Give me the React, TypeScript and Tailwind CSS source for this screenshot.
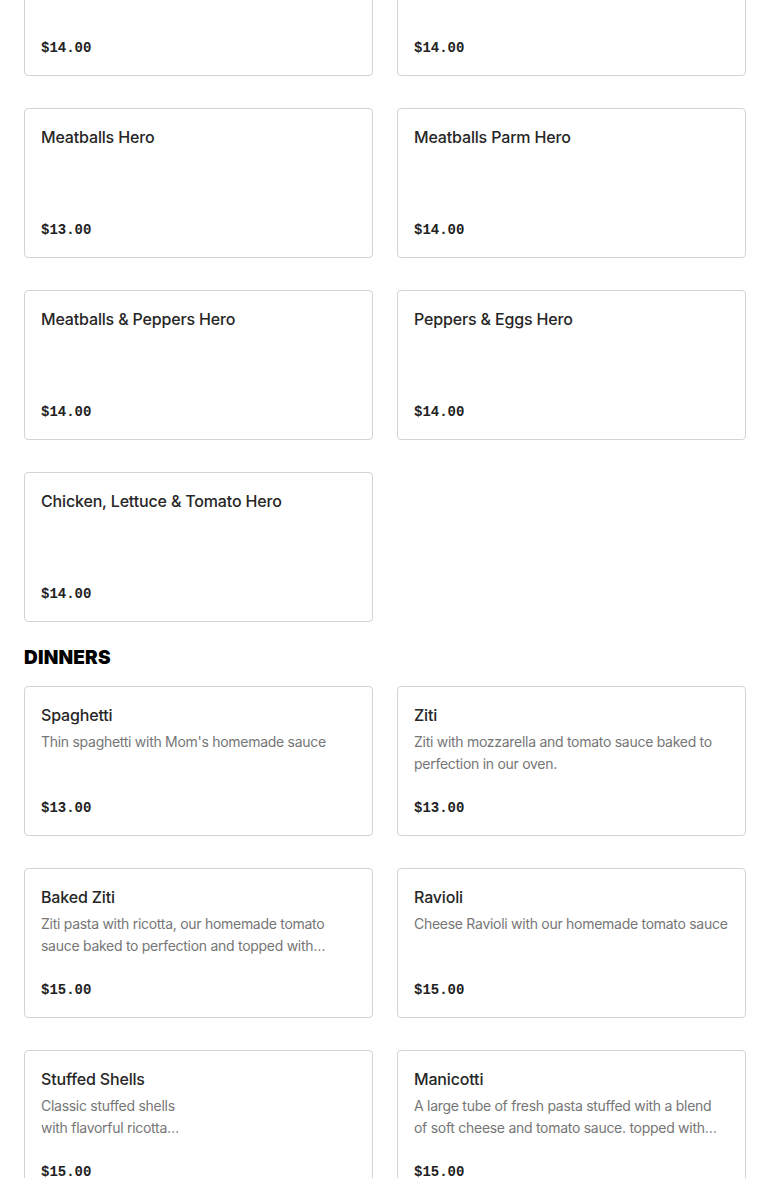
type Item = { name: string; desc?: string; price: string }

const heroes: Item[] = [
  { name: 'Sausage & Peppers Hero', price: '$14.00' },
  { name: 'Sausage Parm Hero', price: '$14.00' },
  { name: 'Meatballs Hero', price: '$13.00' },
  { name: 'Meatballs Parm Hero', price: '$14.00' },
  { name: 'Meatballs & Peppers Hero', price: '$14.00' },
  { name: 'Peppers & Eggs Hero', price: '$14.00' },
  { name: 'Chicken, Lettuce & Tomato Hero', price: '$14.00' },
]

const dinners: Item[] = [
  { name: 'Spaghetti', desc: "Thin spaghetti with Mom's homemade sauce", price: '$13.00' },
  { name: 'Ziti', desc: 'Ziti with mozzarella and tomato sauce baked to perfection in our oven.', price: '$13.00' },
  {
    name: 'Baked Ziti',
    desc: 'Ziti pasta with ricotta, our homemade tomato sauce baked to perfection and topped with mozzarella cheese.',
    price: '$15.00',
  },
  { name: 'Ravioli', desc: 'Cheese Ravioli with our homemade tomato sauce', price: '$15.00' },
  { name: 'Stuffed Shells', desc: 'Classic stuffed shells\nwith flavorful ricotta\ncheese, topped with tomato sauce and mozzarella.', price: '$15.00' },
  {
    name: 'Manicotti',
    desc: 'A large tube of fresh pasta stuffed with a blend\nof soft cheese and tomato sauce. topped with mozzarella.',
    price: '$15.00',
  },
]

function Card({ item }: { item: Item }) {
  return (
    <div className="h-[150px] rounded border border-[#d4d4d4] bg-white pl-4 pr-[17px] pt-4 pb-[15px] flex flex-col">
      <h3 className="text-[16px] leading-6 font-medium tracking-[-0.01em] text-[#262626]">{item.name}</h3>
      {item.desc && (
        <p className="mt-1 text-[14px] leading-[22px] tracking-[-0.02em] text-[#767676] line-clamp-2 whitespace-pre-line">
          {item.desc}
        </p>
      )}
      <div className="mt-auto font-['Liberation_Mono',monospace] text-[14px] leading-6 font-bold text-[#222]">
        {item.price}
      </div>
    </div>
  )
}

export default function App() {
  return (
    <div className="bg-white min-h-screen px-6 font-['Inter',sans-serif] overflow-hidden">
      <div className="-mt-[74px] grid grid-cols-2 gap-x-6 gap-y-8">
        {heroes.map((item) => (
          <Card key={item.name} item={item} />
        ))}
      </div>
      <h2 className="mt-6 mb-4 text-[19px] leading-6 font-black tracking-[0.01em] text-black uppercase">Dinners</h2>
      <div className="grid grid-cols-2 gap-x-6 gap-y-8">
        {dinners.map((item) => (
          <Card key={item.name} item={item} />
        ))}
      </div>
    </div>
  )
}
